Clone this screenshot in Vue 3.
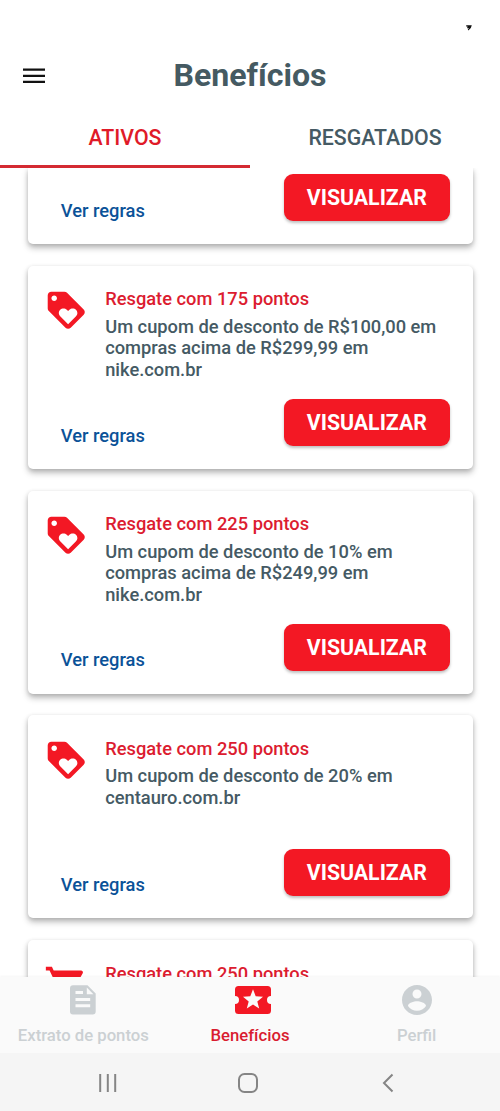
<script setup>
const tag = 'M21.41 11.58l-9-9C12.05 2.22 11.55 2 11 2H4c-1.1 0-2 .9-2 2v7c0 .55.22 1.05.59 1.42l9 9c.36.36.86.58 1.41.58.55 0 1.05-.22 1.41-.59l7-7c.37-.36.59-.86.59-1.41 0-.55-.23-1.06-.59-1.42zM5.5 7C4.67 7 4 6.33 4 5.5S4.67 4 5.5 4 7 4.67 7 5.5 6.33 7 5.5 7zm11.77 8.27L13 19.54l-4.27-4.27C8.28 14.81 8 14.19 8 13.5c0-1.38 1.12-2.5 2.5-2.5.69 0 1.32.28 1.77.74l.73.72.73-.73c.45-.45 1.08-.73 1.77-.73 1.38 0 2.5 1.12 2.5 2.5 0 .69-.28 1.32-.73 1.77z'
const cart = 'M7 18c-1.1 0-1.99.9-1.99 2S5.9 22 7 22s2-.9 2-2-.9-2-2-2zM1 2v2h2l3.6 7.59-1.35 2.45c-.16.28-.25.61-.25.96 0 1.1.9 2 2 2h12v-2H7.42c-.14 0-.25-.11-.25-.25l.03-.12.9-1.63h7.45c.75 0 1.41-.41 1.75-1.03l3.58-6.49c.08-.14.12-.31.12-.48 0-.55-.45-1-1-1H5.21l-.94-2H1zm16 16c-1.1 0-1.99.9-1.99 2s.89 2 1.99 2 2-.9 2-2-.9-2-2-2z'
const cards = [
  { icon: tag, title: 'Resgate com 175 pontos', lines: ['Um cupom de desconto de R$100,00 em', 'compras acima de R$299,99 em', 'nike.com.br'], actions: true },
  { icon: tag, title: 'Resgate com 225 pontos', lines: ['Um cupom de desconto de 10% em', 'compras acima de R$249,99 em', 'nike.com.br'], actions: true },
  { icon: tag, title: 'Resgate com 250 pontos', lines: ['Um cupom de desconto de 20% em', 'centauro.com.br'], actions: true },
  { icon: cart, title: 'Resgate com 250 pontos', lines: [], actions: false },
]
</script>

<template>
  <div class="screen">
    <div class="status">
      <svg width="6" height="6" viewBox="0 0 6 6"><path d="M.2.3h5.600L4.800 3 2.300 5.600 1.800 4.600 3 3.300 1 3.200 1.600 1.600H.2z" fill="#111" /></svg>
    </div>
    <header class="header">
      <svg class="menu" width="22" height="16" viewBox="0 0 22 16"><path d="M0 .5h22v2.3H0zM0 6.7h22V9H0zM0 12.8h22v2.3H0z" fill="#111" /></svg>
      <h1><span>Benefícios</span></h1>
    </header>
    <nav class="tabs">
      <div class="tab active"><span>ATIVOS</span></div>
      <div class="tab"><span>RESGATADOS</span></div>
    </nav>
    <main class="list">
      <section class="card first">
        <div class="actions">
          <a class="rules">Ver regras</a>
          <button class="view"><span>VISUALIZAR</span></button>
        </div>
      </section>
      <section v-for="(c, i) in cards" :key="i" class="card">
        <div class="info">
          <svg class="icon" viewBox="0 0 24 24"><path :d="c.icon" /></svg>
          <div class="text">
            <h2><span>{{ c.title }}</span></h2>
            <p v-for="l in c.lines" :key="l"><span>{{ l }}</span></p>
          </div>
        </div>
        <div v-if="c.actions" class="actions">
          <a class="rules">Ver regras</a>
          <button class="view"><span>VISUALIZAR</span></button>
        </div>
      </section>
    </main>
    <nav class="bottom">
      <div class="item">
        <svg width="26" height="30" viewBox="0 0 26 30"><path fill-rule="evenodd" d="M3 .3h14.500L25.700 8.500V26.500a3 3 0 0 1-3 3H3a3 3 0 0 1-3-3V3.300a3 3 0 0 1 3-3zM5.500 6v3h7.500V6zM5.500 13v2.900h14.700V13zM5.500 19.300v3h14.700v-3zM16.800 2.500v6.800h6.600z" /></svg>
        <span>Extrato de pontos</span>
      </div>
      <div class="item on">
        <svg class="ticket" width="36" height="30" viewBox="0 0 36 30"><path fill-rule="evenodd" d="M3.500 1h29A3.500 3.500 0 0 1 36 4.500V11a4 4 0 0 0 0 8v6.500a3.500 3.500 0 0 1-3.500 3.500h-29A3.500 3.500 0 0 1 0 25.500V19a4 4 0 0 0 0-8V4.500A3.500 3.500 0 0 1 3.500 1zM18 4.300l-2.700 7-7.300.5 5.700 4.600-1.900 7.200 6.200-4 6.200 4-1.900-7.200 5.700-4.600-7.300-.5z" /></svg>
        <span>Benefícios</span>
      </div>
      <div class="item">
        <svg width="30" height="30" viewBox="2 2 20 20"><path d="M12 2C6.48 2 2 6.48 2 12s4.48 10 10 10 10-4.48 10-10S17.52 2 12 2zm0 3c1.66 0 3 1.34 3 3s-1.34 3-3 3-3-1.34-3-3 1.34-3 3-3zm0 14.2c-2.5 0-4.71-1.28-6-3.22.03-1.99 4-3.08 6-3.08 1.99 0 5.97 1.09 6 3.08-1.29 1.94-3.5 3.22-6 3.22z" /></svg>
        <span>Perfil</span>
      </div>
    </nav>
    <footer class="system">
      <svg width="18" height="20" viewBox="0 0 18 20"><path d="M1.200 1v18M8.800 1v18M16.200 1v18" /></svg>
      <svg class="home" width="20" height="20" viewBox="0 0 20 20"><rect x="1" y="1" width="18" height="18" rx="5.5" /></svg>
      <svg width="12" height="20" viewBox="0 0 12 20"><path d="M10.500 1.500L2 10l8.500 8.500" /></svg>
    </footer>
  </div>
</template>

<style scoped>
.screen { width: 500px; height: 1111px; display: flex; flex-direction: column; overflow: hidden; background: #fff; font-family: Roboto, sans-serif; color: #455a64; white-space: nowrap; }
h1, h2, p { margin: 0; }
.status { height: 45px; box-sizing: border-box; padding: 25px 28px 0 0; display: flex; justify-content: flex-end; }
.header { height: 62px; display: grid; grid-template-columns: 68px 1fr 68px; align-items: center; }
.menu { margin-left: 23px; }
h1 { text-align: center; font-size: 32.1px; line-height: 40px; font-weight: 700; color: #455a62; padding-bottom: 2px; }
.tabs { height: 61px; display: flex; }
.tab { flex: 1; box-sizing: border-box; display: flex; align-items: center; justify-content: center; padding-top: 2px; border-bottom: 3px solid transparent; font-size: 21.3px; font-weight: 500; }
.active { color: #e01a28; border-bottom-color: #d42a32; }
.list { height: 809px; overflow: hidden; display: flex; flex-direction: column; gap: 21.8px; padding: 0 27.5px; box-sizing: border-box; }
.card { flex: none; height: 203px; box-sizing: border-box; border-radius: 5px; background: #fff; padding: 22.6px 22.7px 22.2px 16.9px; display: flex; flex-direction: column; justify-content: space-between; box-shadow: 0 4px 6px rgba(0, 0, 0, .26), 0 1px 4px rgba(0, 0, 0, .12); }
.card.first { height: 76px; padding-top: 0; justify-content: flex-end; border-radius: 0 0 5px 5px; }
.info { display: flex; gap: 16.3px; }
.icon { width: 44.5px; height: 44.5px; fill: #f31824; }
.text { font-size: 18.3px; font-weight: 500; line-height: 21.6px; }
h2 { font-size: 18.3px; font-weight: 500; line-height: 22px; color: #dc1c30; margin-bottom: 5.4px; }
.actions { display: flex; justify-content: space-between; align-items: center; padding-left: 16.4px; }
.rules { color: #0b5298; font-size: 18.3px; font-weight: 500; line-height: 22px; margin-top: 26px; }
.view { width: 166px; height: 47px; padding: 0; border: 0; border-radius: 9px; background: #f31824; color: #fff; font: 700 21.3px Roboto, sans-serif; box-shadow: 0 2px 3px rgba(0, 0, 0, .25); }
.bottom { height: 76px; background: #fafafa; display: grid; grid-template-columns: repeat(3, 1fr); position: relative; box-shadow: 0 -1px 2px rgba(0, 0, 0, .04); }
.item { display: flex; flex-direction: column; align-items: center; padding-top: 8px; gap: 11px; color: #cbd0d3; fill: #cbd0d3; font-size: 16.7px; line-height: 20px; font-weight: 500; }
.on { color: #d91c30; fill: #f31824; }
.ticket { margin-left: 6px; }
.system { flex: 1; background: #f5f5f5; display: flex; justify-content: space-between; align-items: center; padding: 1px 106px 0 99px; }
.system svg { fill: none; stroke: #858585; stroke-width: 2; }
.system .home { margin-right: 4px; }
</style>
